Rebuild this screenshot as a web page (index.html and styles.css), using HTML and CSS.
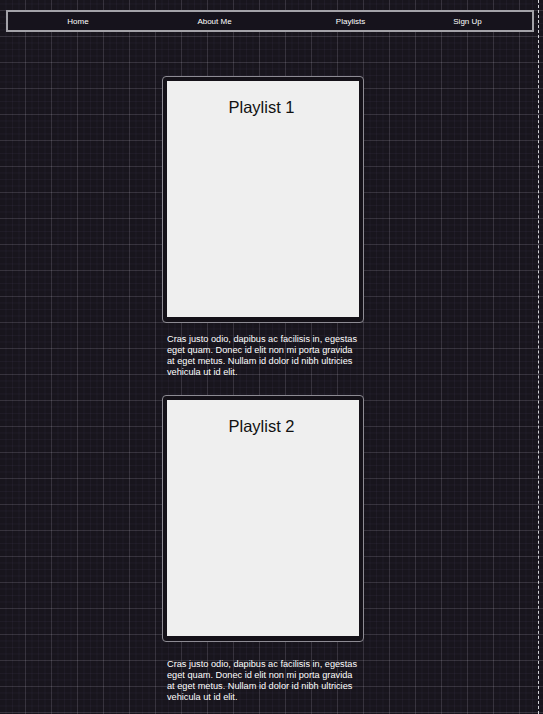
FILE: index.html
```html
<!DOCTYPE html>
<html lang="en">
<head>
<meta charset="utf-8">
<title>Playlists</title>
<link rel="stylesheet" href="styles.css">
</head>
<body>
<div class="page">
  <nav class="nav">
    <a class="nav-link" href="#">Home</a>
    <a class="nav-link" href="#">About Me</a>
    <a class="nav-link" href="#">Playlists</a>
    <a class="nav-link" href="#">Sign Up</a>
  </nav>
  <main class="list">
    <section class="item">
      <div class="card">
        <div class="panel"><h2 class="title">Playlist 1</h2></div>
      </div>
      <p class="desc">Cras justo odio, dapibus ac facilisis in, egestas eget quam. Donec id elit non mi porta gravida at eget metus. Nullam id dolor id nibh ultricies vehicula ut id elit.</p>
    </section>
    <section class="item">
      <div class="card">
        <div class="panel"><h2 class="title">Playlist 2</h2></div>
      </div>
      <p class="desc">Cras justo odio, dapibus ac facilisis in, egestas eget quam. Donec id elit non mi porta gravida at eget metus. Nullam id dolor id nibh ultricies vehicula ut id elit.</p>
    </section>
  </main>
</div>
</body>
</html>
```
FILE: styles.css
```css
html, body {
  margin: 0;
  padding: 0;
}
body {
  background-color: #18151d;
  background-image:
    linear-gradient(to right, rgba(255,255,255,0.1) 1px, transparent 1px),
    linear-gradient(to bottom, rgba(255,255,255,0.1) 1px, transparent 1px),
    linear-gradient(to right, rgba(190,170,255,0.045) 1px, transparent 1px),
    linear-gradient(to bottom, rgba(190,170,255,0.045) 1px, transparent 1px);
  background-size: 26px 26px, 26px 26px, 6.5px 6.5px, 6.5px 6.5px;
  background-position: 25px 10px, 25px 10px, 25px 10px, 25px 10px;
  font-family: "Liberation Sans", Arial, sans-serif;
  color: #fff;
  min-height: 714px;
  overflow: hidden;
}
.page {
  box-sizing: border-box;
  width: 539px;
  min-height: 714px;
  border-right: 1px dashed #d4d4d8;
  padding-top: 10px;
}
.nav {
  box-sizing: border-box;
  margin-left: 6px;
  width: 528px;
  height: 22px;
  border: 2px solid #a3a2a8;
  background: #16131c;
  display: grid;
  grid-template-columns: 140px 133px 139px 95px 1fr;
  align-items: center;
}
.nav-link {
  color: #fff;
  text-decoration: none;
  font-size: 8px;
  text-align: center;
}
.list {
  margin-top: 44px;
  margin-left: 162px;
  width: 202px;
}
.card {
  box-sizing: border-box;
  width: 202px;
  border: 1px solid #8d8b93;
  border-radius: 4px;
  padding: 4px 3px 5px 4px;
  background: #141118;
}
.panel {
  width: 192px;
  height: 236px;
  background: #efefef;
  padding-top: 17px;
  box-sizing: border-box;
}
.title {
  margin: 0;
  padding-right: 3px;
  text-align: center;
  font-weight: normal;
  font-size: 16.5px;
  color: #111;
}
.desc {
  margin: 11px 0 17px 5px;
  width: 192px;
  font-size: 9.2px;
  line-height: 11px;
  color: #fff;
}
.item + .item .desc {
  margin-top: 17px;
}
```
